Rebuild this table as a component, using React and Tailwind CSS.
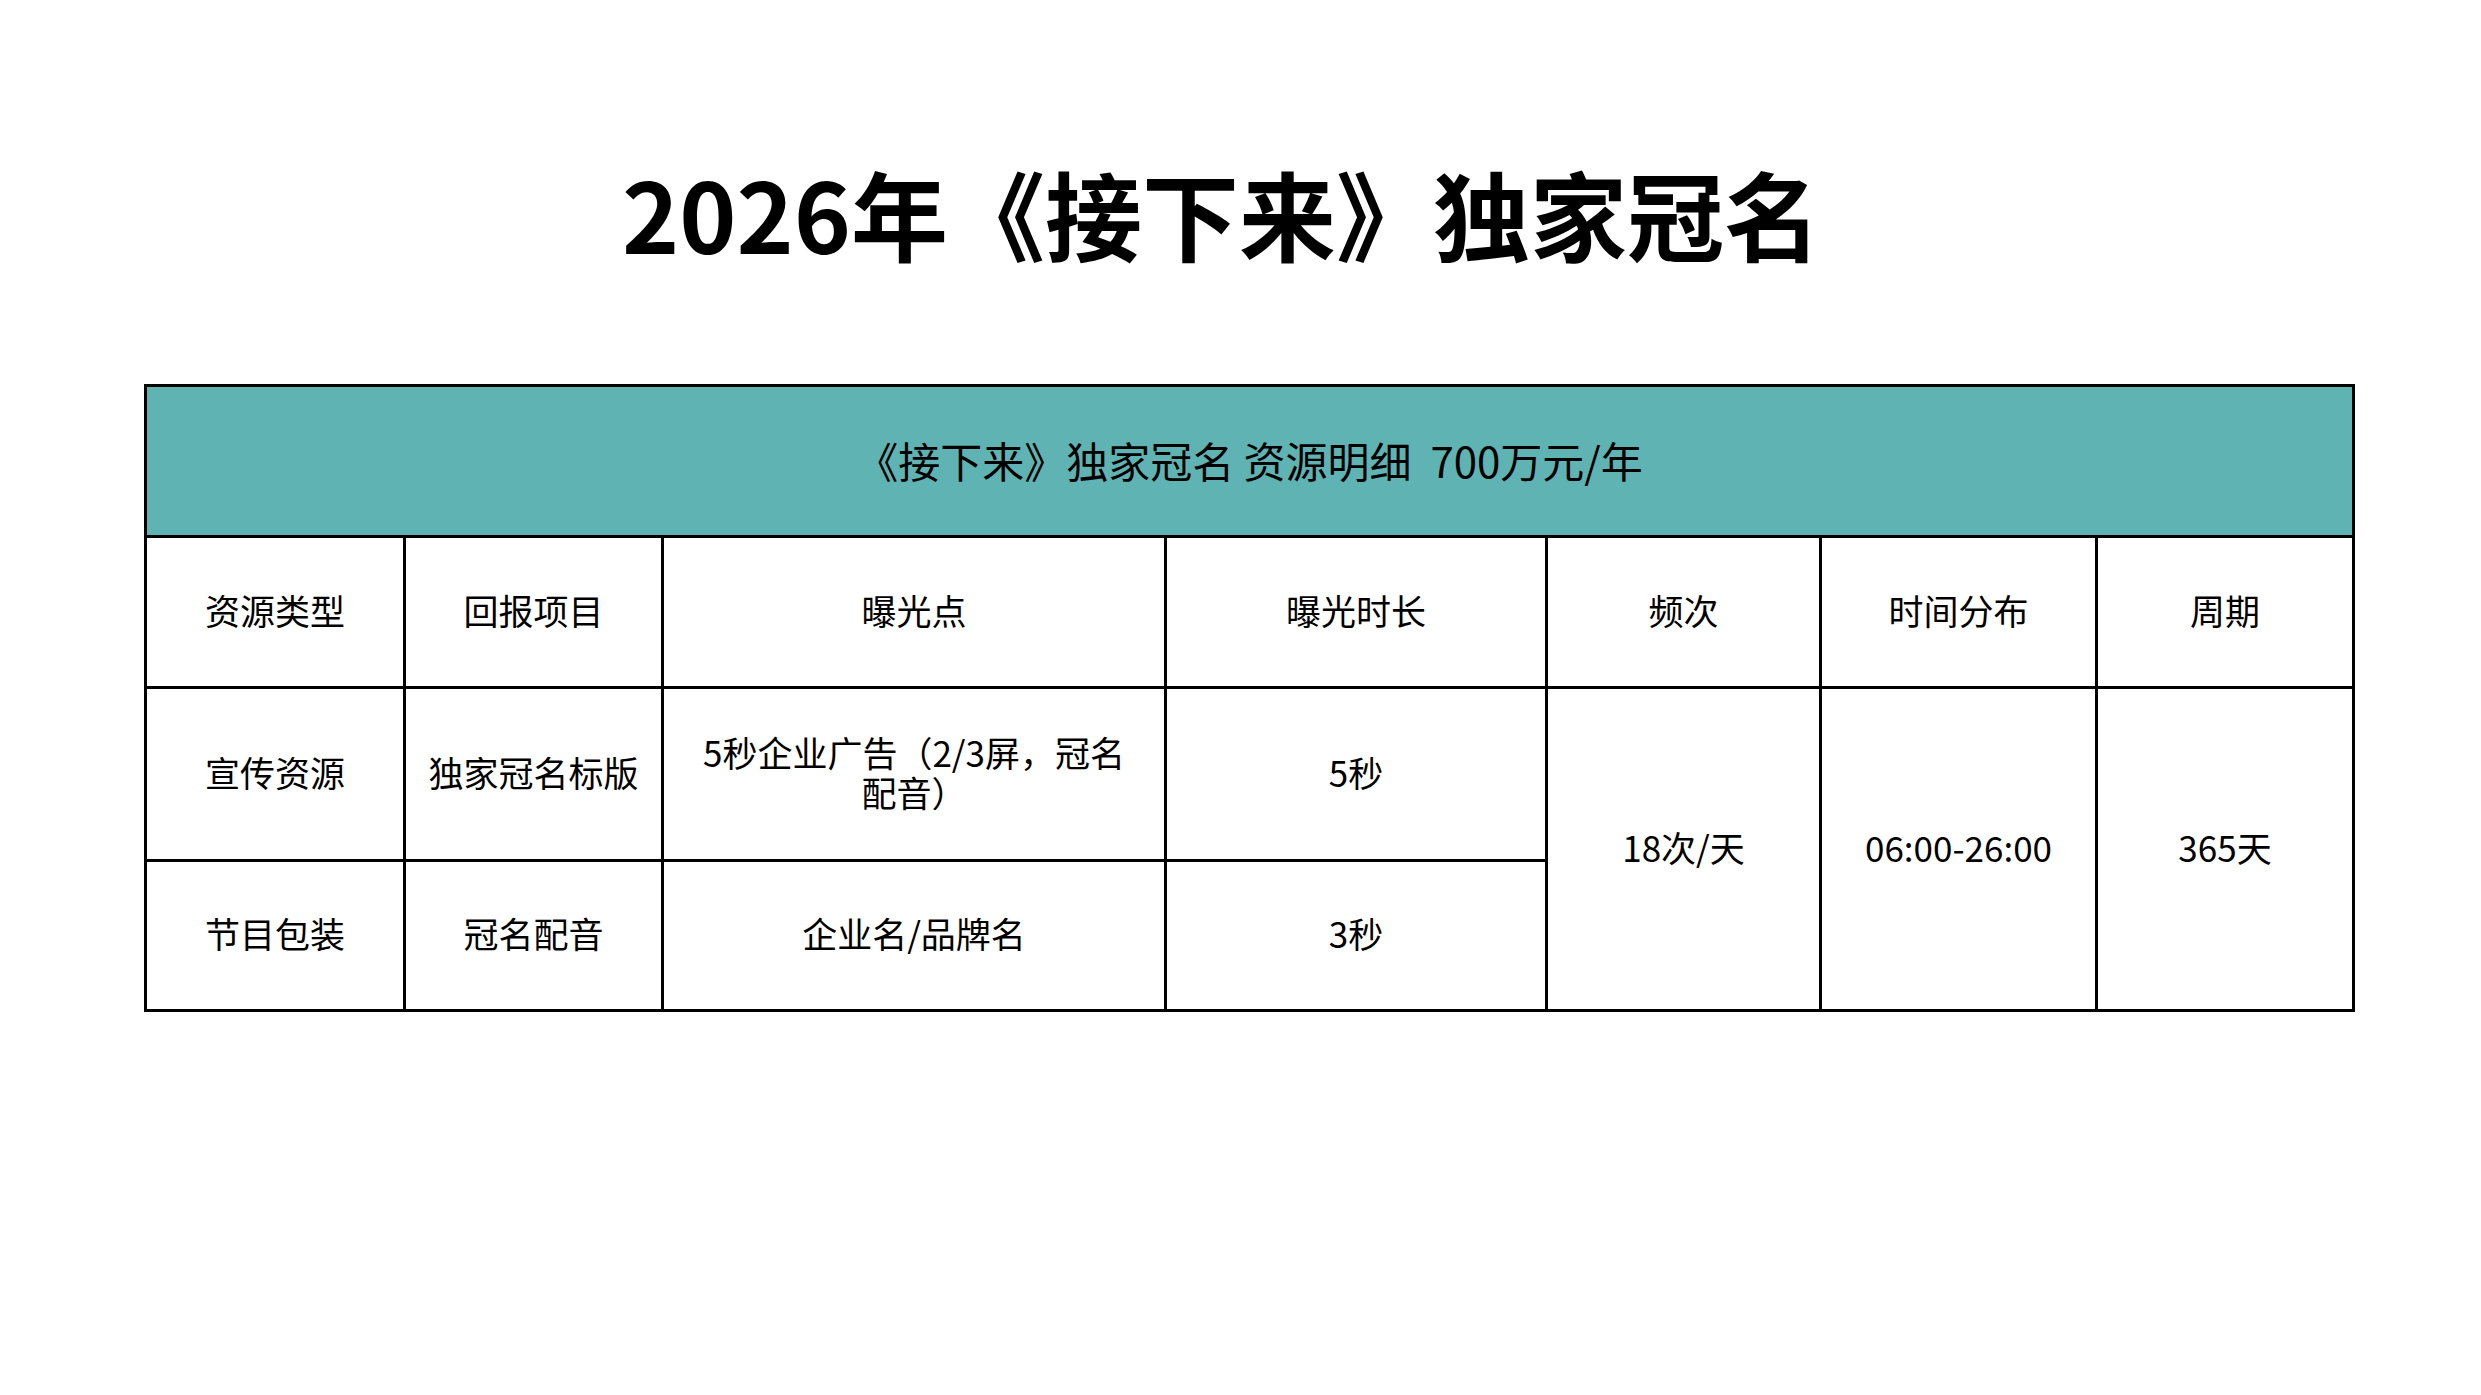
export default function App() {
  const cell =
    "bg-white flex items-center justify-center text-center text-[35px] leading-[40px] text-black pb-[5px]";
  return (
    <div className="w-[2481px] h-[1395px] bg-white font-['Noto_Sans_CJK_SC',sans-serif] overflow-hidden">
      <div className="pt-[163px] flex justify-center pr-[38px]">
        <h1 className="text-[97px] leading-[97px] font-bold text-black">
          2026年《接下来》独家冠名
        </h1>
      </div>
      <div className="mt-[124px] ml-[144px] w-[2211px] bg-black p-[3px] grid gap-[3px] grid-cols-[256px_255px_500px_378px_271px_273px_254px] grid-rows-[148px_148px_170px_147px]">
        <div className="col-span-7 bg-[#5FB3B3] flex items-center justify-center text-[42px] text-black pb-[3px]">
          《接下来》独家冠名 资源明细&nbsp;&nbsp;700万元/年
        </div>

        <div className={cell}>资源类型</div>
        <div className={cell}>回报项目</div>
        <div className={cell}>曝光点</div>
        <div className={cell}>曝光时长</div>
        <div className={cell}>频次</div>
        <div className={cell}>时间分布</div>
        <div className={cell}>周期</div>

        <div className={cell}>宣传资源</div>
        <div className={cell}>独家冠名标版</div>
        <div className={cell}>
          <span className="block leading-[40px]">
            5秒企业广告（2/3屏，冠名
            <br />
            配音）
          </span>
        </div>
        <div className={cell}>5秒</div>
        <div className={`${cell} row-span-2`}>18次/天</div>
        <div className={`${cell} row-span-2`}>06:00-26:00</div>
        <div className={`${cell} row-span-2`}>365天</div>

        <div className={cell}>节目包装</div>
        <div className={cell}>冠名配音</div>
        <div className={cell}>企业名/品牌名</div>
        <div className={cell}>3秒</div>
      </div>
    </div>
  );
}
